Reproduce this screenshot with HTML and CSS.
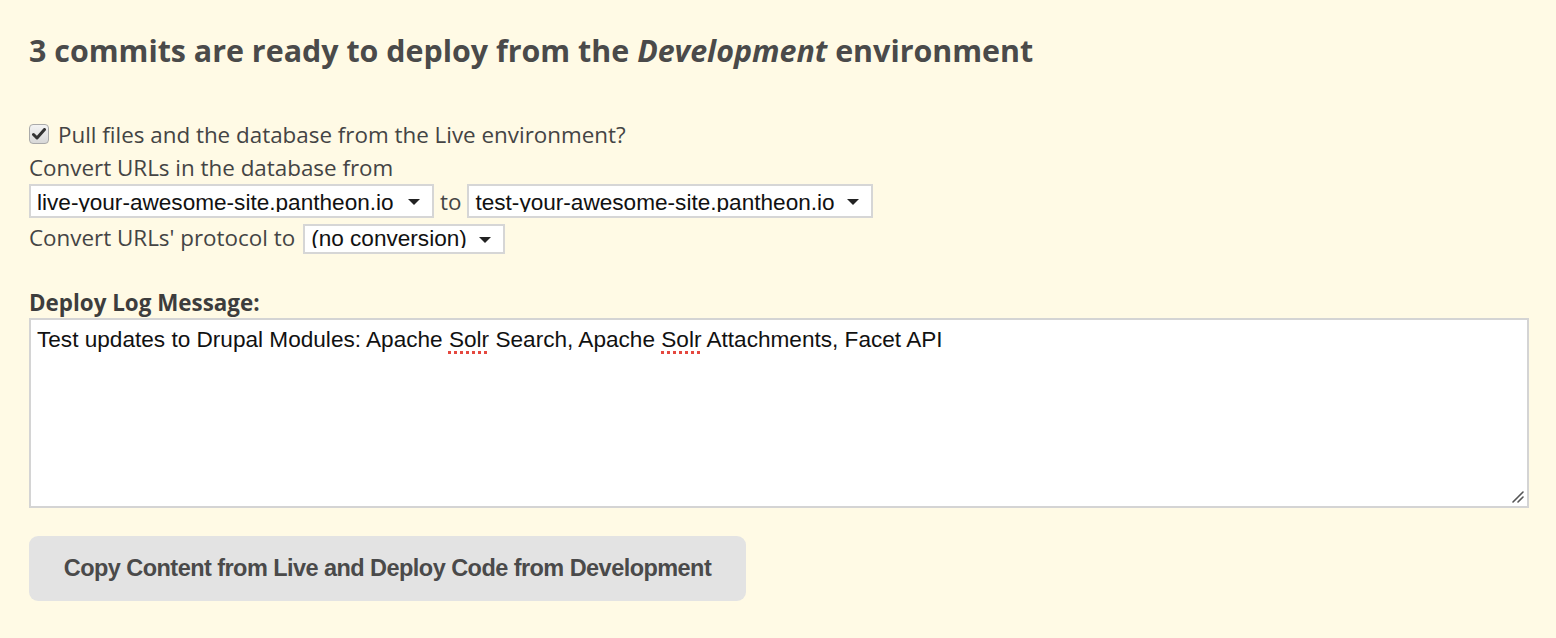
FILE: index.html
```html
<!DOCTYPE html>
<html>
<head>
<meta charset="utf-8">
<link rel="stylesheet" href="styles.css">
</head>
<body>
<div class="page">
  <h1 class="title">3 commits are ready to deploy from the <em>Development</em> environment</h1>
  <div class="options">
    <label class="row check-row">
      <span class="checkbox"><svg width="14" height="12" viewBox="0 0 14 12"><path d="M1.5 6.5 L5 10 L12.5 1.5" fill="none" stroke="#333" stroke-width="3" stroke-linecap="round" stroke-linejoin="round"/></svg></span>
      <span>Pull files and the database from the Live environment?</span>
    </label>
    <div class="row">Convert URLs in the database from</div>
    <div class="row select-row">
      <span class="select sel-from"><span class="sel-text">live-your-awesome-site.pantheon.io</span><span class="arrow"></span></span>
      <span class="to">to</span>
      <span class="select sel-to"><span class="sel-text">test-your-awesome-site.pantheon.io</span><span class="arrow"></span></span>
    </div>
    <div class="row select-row proto-row">
      <span class="proto-label">Convert URLs' protocol to</span>
      <span class="select sel-proto"><span class="sel-text">(no conversion)</span><span class="arrow"></span></span>
    </div>
  </div>
  <div class="log">
    <div class="log-label">Deploy Log Message:</div>
    <div class="textarea">
      <span class="ta-text">Test updates to Drupal Modules: Apache <span class="spell">Solr</span> Search, Apache <span class="spell">Solr</span> Attachments, Facet API</span>
      <svg class="grip" width="12" height="12" viewBox="0 0 12 12"><path d="M11 1 L1 11 M11 6 L6 11" stroke="#555" stroke-width="1.6" stroke-linecap="round"/></svg>
    </div>
  </div>
  <button class="deploy">Copy Content from Live and Deploy Code from Development</button>
</div>
</body>
</html>
```
FILE: styles.css
```css
html, body {
  margin: 0;
  padding: 0;
  background: #fffae5;
}
.page {
  padding: 0 27px 0 29px;
  font-family: "Open Sans", "Liberation Sans", sans-serif;
  color: #4a4a4a;
}
.title {
  margin: 0;
  padding-top: 31px;
  font-size: 30.4px;
  line-height: 40px;
  font-weight: 700;
  color: #4a4a4a;
}
.title em {
  font-style: italic;
}
.options {
  margin-top: 46px;
  display: flex;
  flex-direction: column;
  font-size: 22.4px;
  color: #444;
}
.row {
  display: flex;
  align-items: center;
  height: 33px;
}
.check-row {
  gap: 9px;
  height: 34px;
}
.checkbox {
  width: 18px;
  height: 18px;
  border: 1px solid #aaa;
  border-radius: 4px;
  background: linear-gradient(#f4f4f4, #d8d8d8);
  display: flex;
  align-items: center;
  justify-content: center;
}
.select-row {
  gap: 5px;
  height: 34px;
}
.proto-row {
  gap: 8px;
  height: 36px;
  align-items: flex-end;
}
.proto-label {
  align-self: center;
  margin-top: 3px;
}
.select {
  position: relative;
  display: flex;
  align-items: flex-start;
  box-sizing: border-box;
  height: 34px;
  border: 2px solid #d6d6d6;
  background: #fff;
  font-family: "Liberation Sans", Arial, sans-serif;
  font-size: 22.6px;
  color: #111;
  padding: 0 0 0 6px;
}
.sel-text {
  display: block;
  margin-top: 4px;
  height: 22px;
  line-height: 26px;
  overflow: hidden;
  white-space: nowrap;
}
.arrow {
  position: absolute;
  right: 12px;
  top: 13px;
  width: 0;
  height: 0;
  border-left: 6px solid transparent;
  border-right: 6px solid transparent;
  border-top: 6px solid #222;
}
.sel-from { width: 405px; }
.sel-to { width: 406px; }
.sel-proto { width: 202px; height: 30px; }
.sel-proto .sel-text { margin-top: 0; height: 22px; }
.sel-proto .arrow { top: 11px; }
.to { padding: 0 1px; }
.log {
  margin-top: 34px;
}
.log-label {
  font-size: 22.4px;
  font-weight: 700;
  color: #3d3d3d;
  line-height: 30px;
}
.textarea {
  position: relative;
  box-sizing: border-box;
  height: 190px;
  border: 2px solid #d4d4d4;
  background: #fff;
  font-family: "Liberation Sans", Arial, sans-serif;
  font-size: 22.6px;
  color: #111;
  padding: 7px 6px 2px;
  line-height: 26px;
}
.spell {
  text-decoration: underline dotted #e5483f;
  text-decoration-thickness: 3px;
  text-underline-offset: 4px;
}
.grip {
  position: absolute;
  right: 3px;
  bottom: 3px;
}
.deploy {
  display: block;
  margin-top: 28px;
  width: 717px;
  height: 65px;
  border: none;
  border-radius: 9px;
  background: #e3e3e3;
  font-family: "Liberation Sans", Arial, sans-serif;
  font-weight: 700;
  font-size: 23.5px;
  letter-spacing: -0.55px;
  color: #4a4a4a;
  padding: 0;
}
```
